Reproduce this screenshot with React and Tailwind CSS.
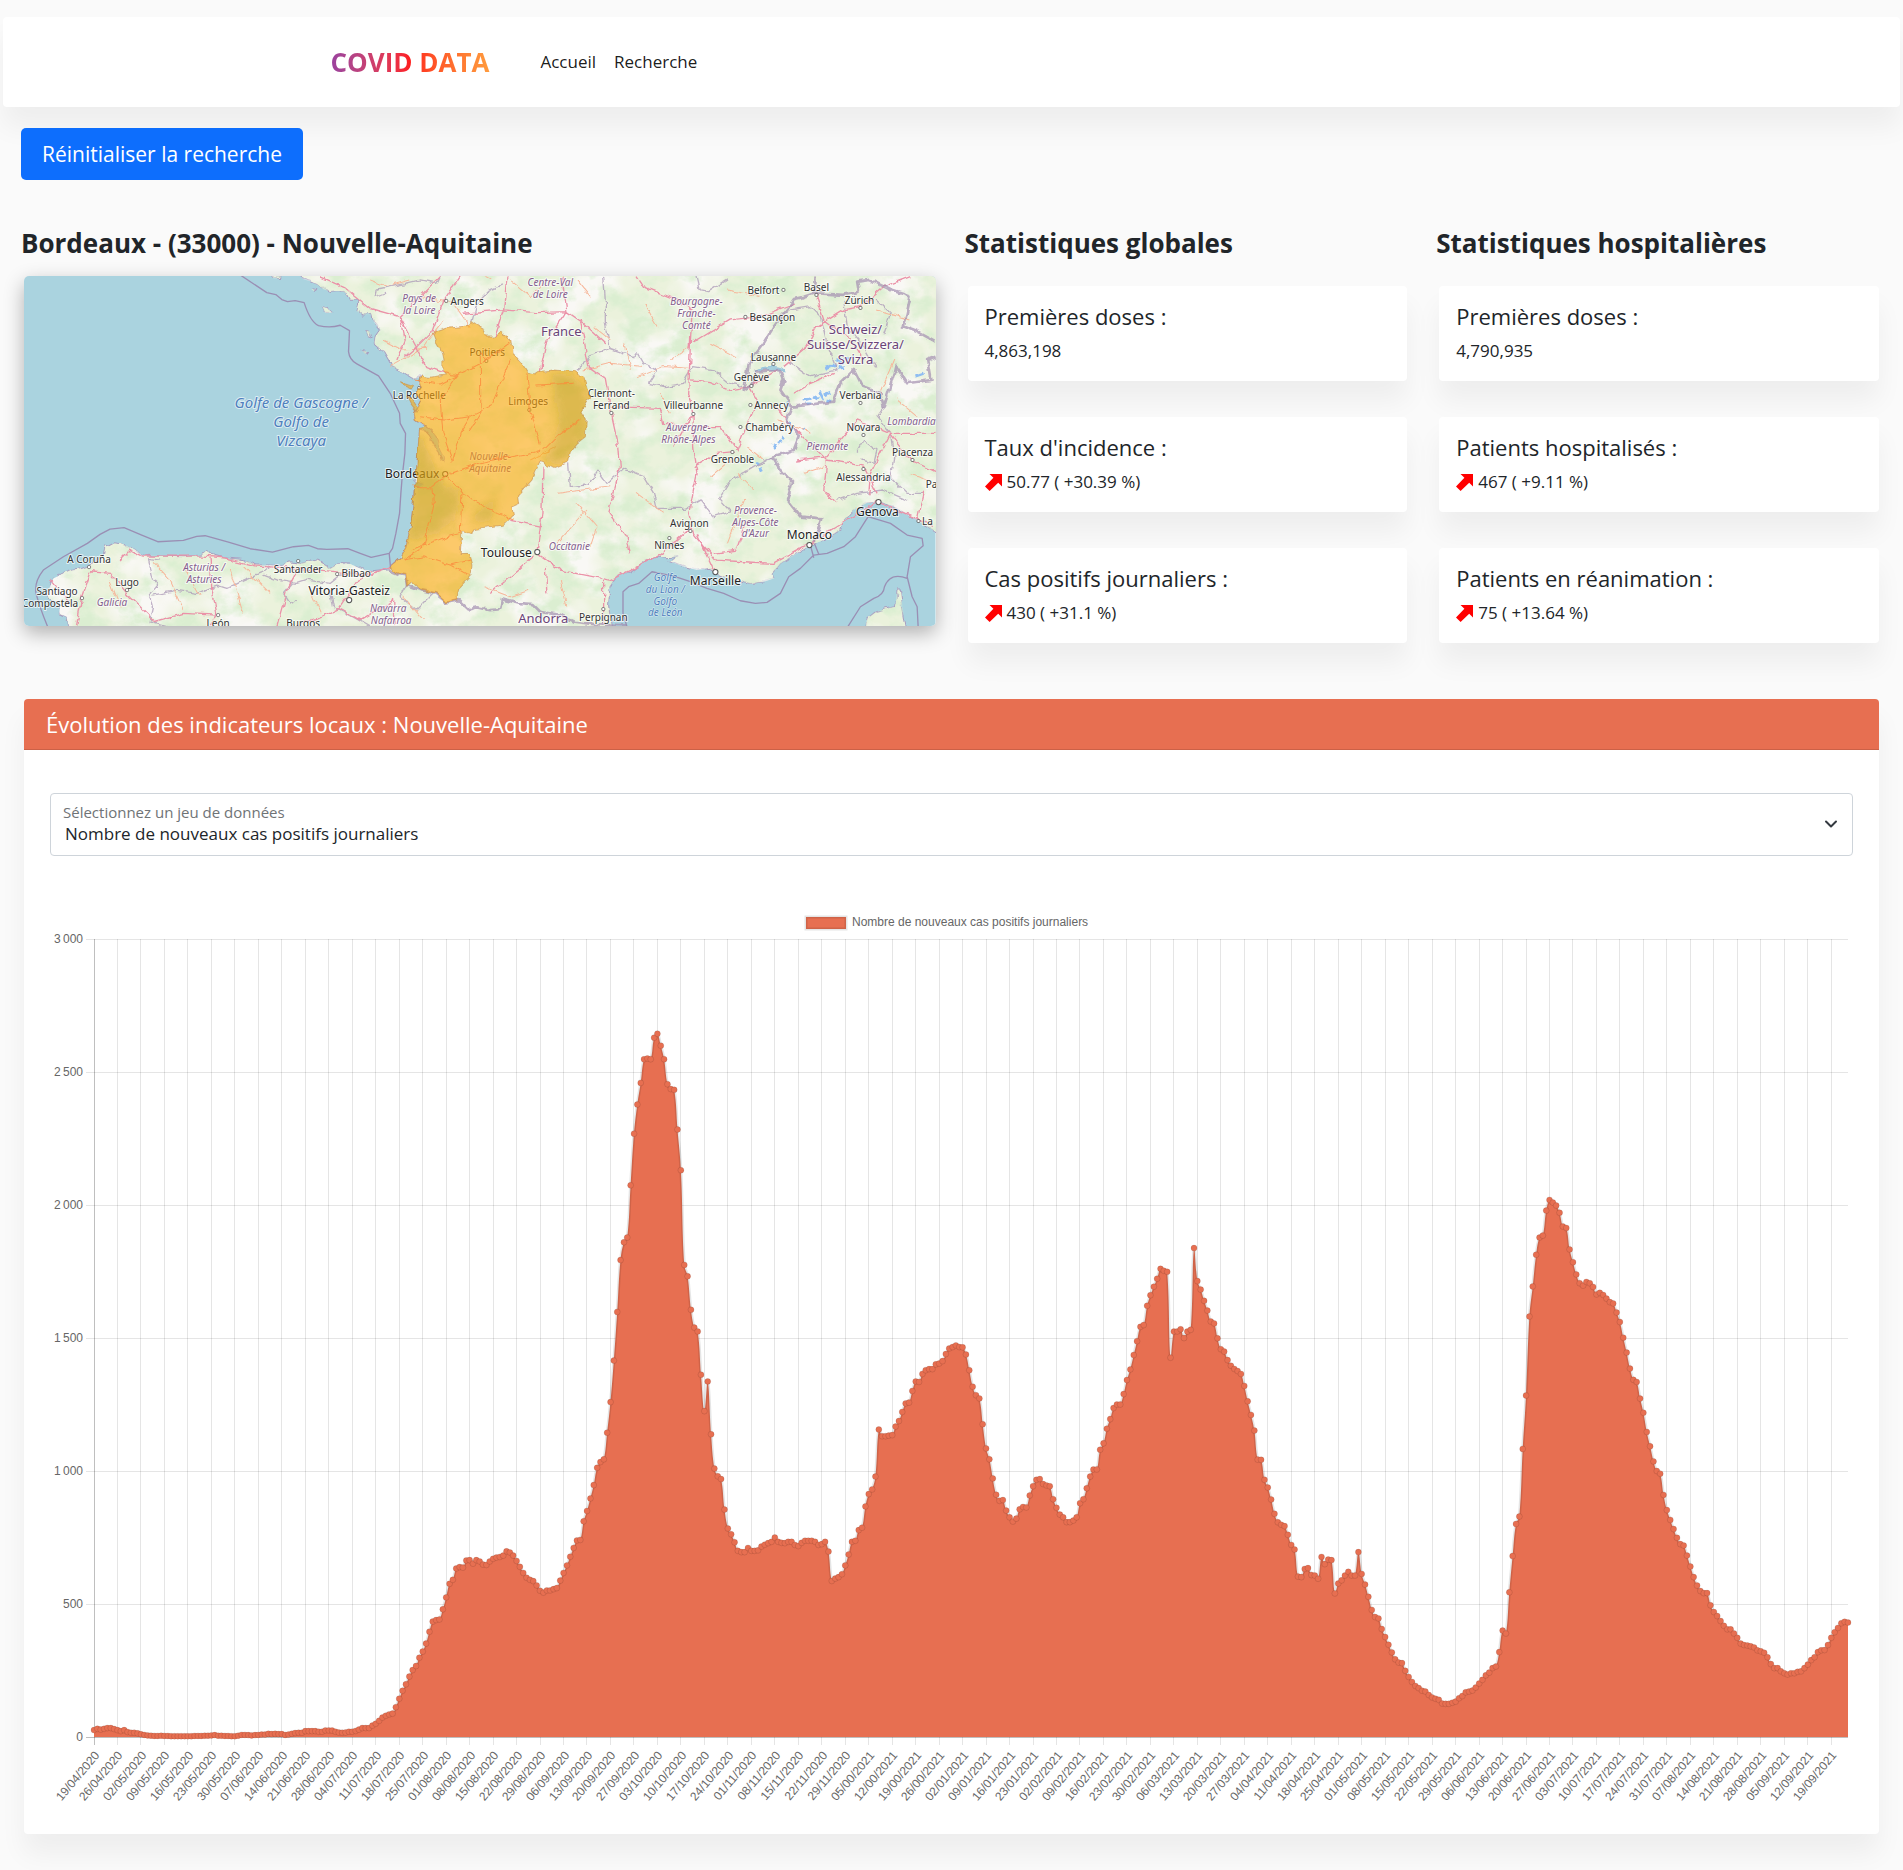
import React from "react";

/* ---------- Data ---------- */

const DAILY_CASES = [
  26, 31, 28, 31, 34, 34, 30, 26, 22, 26, 19, 16, 16, 14, 10, 8, 6, 5, 4, 4, 5, 4, 4, 3, 3, 3, 3, 3, 3, 3, 4, 4, 4, 5, 5, 6, 7, 5, 5, 4,
  4, 3, 3, 5, 8, 8, 7, 6, 7, 8, 9, 9, 12, 11, 12, 11, 11, 8, 9, 12, 15, 16, 16, 22, 22, 22, 22, 20, 20, 25, 25, 24, 20, 17, 16, 17, 20, 20, 23, 28,
  34, 34, 34, 43, 50, 61, 73, 80, 85, 88, 112, 144, 174, 198, 227, 252, 267, 298, 321, 351, 396, 434, 440, 442, 480, 525, 576, 591, 634, 639,
  637, 664, 665, 652, 665, 660, 648, 647, 660, 670, 675, 677, 682, 698, 694, 682, 662, 640, 617, 599, 591, 586, 570, 550, 543, 551, 551, 556, 560, 588,
  617, 645, 678, 711, 739, 741, 811, 850, 897, 947, 1012, 1034, 1044, 1144, 1259, 1415, 1598, 1793, 1860, 1878, 2074, 2268, 2378, 2459, 2548, 2551, 2548, 2629, 2644, 2599,
  2548, 2454, 2436, 2433, 2284, 2131, 1775, 1732, 1606, 1539, 1525, 1362, 1225, 1337, 1138, 1009, 980, 970, 855, 784, 762, 732, 700, 695, 695, 711, 700, 700, 702, 716,
  723, 729, 734, 750, 734, 730, 729, 734, 734, 722, 718, 730, 738, 738, 738, 734, 722, 725, 734, 697, 587, 596, 601, 612, 645, 686, 734, 738, 778, 787,
  867, 913, 931, 979, 1156, 1131, 1131, 1133, 1135, 1167, 1188, 1222, 1254, 1257, 1301, 1337, 1335, 1365, 1379, 1383, 1383, 1401, 1404, 1413, 1440, 1461, 1466, 1472, 1466, 1465,
  1438, 1379, 1317, 1285, 1273, 1176, 1085, 1044, 972, 911, 888, 891, 851, 826, 810, 821, 856, 865, 863, 908, 943, 967, 970, 951, 946, 943, 894, 862, 836, 826,
  808, 808, 814, 826, 879, 894, 935, 979, 1006, 1006, 1080, 1104, 1159, 1195, 1237, 1250, 1250, 1289, 1342, 1382, 1436, 1488, 1542, 1549, 1621, 1661, 1693, 1723, 1760, 1753,
  1749, 1426, 1524, 1525, 1533, 1500, 1524, 1531, 1838, 1714, 1682, 1640, 1603, 1562, 1555, 1499, 1458, 1449, 1417, 1396, 1384, 1376, 1365, 1320, 1262, 1211, 1152, 1043, 1042, 967,
  938, 893, 839, 807, 798, 793, 760, 722, 705, 603, 601, 632, 635, 609, 607, 595, 677, 650, 667, 665, 540, 577, 589, 607, 621, 607, 607, 695, 613, 573,
  527, 478, 451, 446, 406, 376, 347, 318, 292, 280, 278, 249, 226, 207, 192, 184, 174, 171, 158, 149, 144, 140, 126, 125, 125, 129, 133, 146, 154, 168,
  171, 175, 186, 201, 215, 232, 242, 259, 265, 319, 400, 389, 544, 680, 801, 829, 1083, 1284, 1581, 1694, 1813, 1878, 1885, 1979, 2019, 2009, 1998, 1971, 1919, 1914,
  1833, 1785, 1739, 1706, 1697, 1711, 1706, 1692, 1664, 1670, 1662, 1648, 1635, 1630, 1596, 1560, 1501, 1445, 1385, 1343, 1335, 1272, 1219, 1147, 1093, 1036, 1000, 990, 910, 853,
  816, 782, 749, 725, 720, 682, 641, 601, 569, 549, 541, 541, 495, 470, 455, 436, 418, 405, 405, 389, 373, 351, 346, 344, 341, 337, 326, 322, 317, 300,
  274, 259, 259, 247, 240, 235, 240, 240, 245, 247, 259, 272, 289, 300, 319, 326, 327, 346, 373, 394, 410, 428, 433, 430,
];

const WEEKS = [
  ["2020", "19/04 26/04 02/05 09/05 16/05 23/05 30/05 07/06 14/06 21/06 28/06 04/07 11/07 18/07 25/07 01/08 08/08 15/08 22/08 29/08 06/09 13/09 20/09 27/09 03/10 10/10 17/10 24/10 01/11 08/11 15/11 22/11 29/11"],
  ["2021", "05/00 12/00 19/00 26/00 02/01 09/01 16/01 23/01 02/02 09/02 16/02 23/02 30/02 06/03 13/03 20/03 27/03 04/04 11/04 18/04 25/04 01/05 08/05 15/05 22/05 29/05 06/06 13/06 20/06 27/06 03/07 10/07 17/07 24/07 31/07 07/08 14/08 21/08 28/08 05/09 12/09 19/09"],
].flatMap(([year, days]) => days.split(" ").map((d) => `${d}/${year}`));

const GLOBAL_STATS = [
  { label: "Premières doses :", value: "4,863,198" },
  { label: "Taux d'incidence :", value: "50.77 ( +30.39 %)", up: true },
  { label: "Cas positifs journaliers :", value: "430 ( +31.1 %)", up: true },
];

const HOSPITAL_STATS = [
  { label: "Premières doses :", value: "4,790,935" },
  { label: "Patients hospitalisés :", value: "467 ( +9.11 %)", up: true },
  { label: "Patients en réanimation :", value: "75 ( +13.64 %)", up: true },
];

/* ---------- Map ---------- */

const LAND =
  "M860,40 L880,58 900,64 925,75 940,88 960,95 985,92 1010,100 1020,118 1045,118 1045,135 1040,155 1060,165 1085,163 1090,185 1110,210 1095,232 1092,250 1120,275 1135,300 1145,320 1175,335 1200,350 1215,357 1235,348 1225,370 1230,385 1218,400 1235,420 1225,440 1212,460 1215,478 1240,495 1262,508 1278,530 1288,565 1302,604 1292,598 1275,562 1258,530 1238,508 1228,505 1224,560 1218,640 1214,665 1240,672 1225,683 1213,680 1208,740 1200,800 1188,860 1170,895 1140,920 1137,930 1085,935 1050,925 1020,912 985,910 960,925 930,905 905,900 870,910 840,905 815,918 780,915 740,915 700,898 640,893 610,885 590,872 570,885 520,890 450,888 395,885 375,868 350,858 330,850 310,848 285,862 280,885 262,900 240,915 215,925 190,930 160,940 130,955 120,980 110,1000 120,1015 150,1030 148,1060 170,1070 180,1110 1805,1110 1795,1040 1798,980 1820,945 1860,935 1900,905 1940,888 1970,893 2000,890 1980,905 2020,920 2060,930 2100,925 2115,940 2140,950 2200,965 2220,970 2260,965 2290,955 2285,940 2310,910 2360,880 2400,855 2440,840 2490,810 2500,785 2530,750 2570,728 2610,725 2650,740 2700,770 2740,795 2790,820 2790,40 Z" +
  "M2565,1110 L2570,1075 2595,1055 2630,1045 2655,1040 2660,990 2670,990 2676,1040 2688,1110 Z" +
  "M937,140 L950,145 966,158 945,158 Z M1068,212 L1078,214 1085,232 1074,228 Z M1055,272 L1070,275 1066,282 Z M904,87 L916,89 910,94 Z M785,48 L812,48 812,56 790,55 Z";

const REGION =
  "M1267,220 L1310,205 1370,198 1385,185 1400,195 1422,208 1428,228 1450,228 1472,217 1505,245 1508,280 1535,310 1550,335 1575,342 1585,335 1630,330 1695,335 1720,355 1738,410 1712,455 1728,480 1725,530 1700,550 1680,575 1675,605 1628,625 1590,605 1580,625 1565,660 1525,705 1528,730 1505,740 1510,765 1480,795 1440,800 1395,805 1385,820 1355,815 1350,880 1375,880 1385,915 1383,945 1345,985 1340,1020 1310,1028 1280,1000 1230,990 1205,965 1190,978 1185,945 1160,938 1140,922 1170,895 1188,860 1200,800 1208,740 1213,680 1222,660 1218,640 1224,560 1228,505 1250,500 1215,478 1212,460 1225,440 1235,420 1218,400 1230,385 1225,370 1235,348 1260,352 1305,345 1298,335 1298,300 1290,265 1275,240 Z" +
  "M1170,368 L1185,372 1210,380 1205,387 1180,376 Z M1190,412 L1205,420 1222,445 1218,455 1200,432 Z";

const MARITIME =
  "M690,45 L770,98 797,104 815,119 832,125 855,122 882,128 Q900,185 925,197 Q960,205 990,196 L1018,212 1015,275 Q1018,300 1040,312 L1105,348 1140,400 1168,460 1170,490 1186,520 1184,580 1176,650 1172,700 1168,760 1157,820 1147,865 1137,880 1083,892 1050,880 1013,866 950,868 922,866 895,856 850,860 787,876 720,866 655,846 585,827 560,829 520,841 443,845 395,825 342,803 300,807 270,823 232,850 160,890 100,930 Q72,965 78,1000 Q90,1045 113,1100 M1137,880 L1141,922" +
  "M1850,1100 L1838,1060 1838,995 1855,980 1885,970 1925,935 1990,948 2040,965 2090,985 2140,1000 2190,1022 2235,1030 2270,1027 2310,1000 2335,950 2370,925 2410,885 2450,880 2500,860 2535,830 2573,770 M2400,855 L2410,893 M2412,850 L2426,885 M2573,770 L2640,790 2690,825 2735,835 2738,857 2700,890 2690,950 2705,1010 2720,1040 2723,1100 M2690,955 Q2640,935 2622,980 Q2620,1005 2590,1015 L2550,1040 2512,1100";

const BORDERS =
  "M1137,930 L1165,942 1185,945 1190,975 1225,988 1275,1000 1310,1028 1345,1020 1375,1048 1400,1042 1440,1050 1470,1047 1475,1018 1530,1032 1570,1035 1590,1055 1650,1065 1690,1085 1750,1092 1850,1096" +
  "M2415,50 L2415,100 2385,110 2350,118 2330,150 2290,200 2260,250 2215,310 2210,350 2200,390 2225,375 2235,335 2310,330 2320,360 2310,390 2345,440 2430,430 2470,425 2490,370 2530,330 2555,380 2610,400 2620,440 2650,340 2655,318 2690,370 2760,360 2750,300 2775,290 M2415,100 L2500,105 2545,95 2540,65 2580,60 2640,90 2700,110 2680,200 2720,215 2775,245" +
  "M2345,440 L2330,480 2365,530 2350,570 2285,590 2310,630 2345,670 2330,720 2370,770 2435,775 2425,810 2410,845";

const ADMIN =
  "M1095,112 L1098,88 1180,72 1230,60 1280,70 1290,48 M1098,112 L1128,100 M1385,185 L1400,130 1440,90 1475,75 M1780,48 L1785,120 1785,190 1800,265 1870,290 1880,275 1900,310 1940,330 1915,370 1960,380 2020,370 2030,350 2050,320 2110,330 2150,365 2195,380 M1800,265 L1740,285 1735,300 1700,330 M1675,610 L1680,680 1730,675 1760,630 1790,670 1840,625 1900,650 1930,700 1940,745 2025,745 2070,720 2110,770 2160,755 2125,715 2160,660 2200,640 2250,610 2285,590 M2060,48 L2070,90 2095,95 2150,60 M415,895 L430,960 445,970 420,1000 430,1040 420,1085 470,1100 M415,895 L450,900 M430,1005 L500,990 560,1000 620,975 650,985 700,960 760,935 780,918 M760,945 L800,960 860,970 890,960 960,970 1010,930 M850,965 L820,1000 840,1030 860,1020 M960,990 L970,1040 1010,1060 1080,1100 M1190,975 L1170,1010 1220,1050 1270,1000 M2540,575 L2560,540 2600,570 2590,610 2550,600 M2620,440 L2600,470 2640,520 2650,590 2640,650 2690,700 2740,700 M2480,720 L2540,700 2620,690 2690,720 M2300,180 L2340,150 2400,140 2430,170 2450,250 2480,330 2400,350 2330,300 M2500,120 L2510,200 2560,260 2600,330 M2600,120 L2640,160 2620,220";

const MOTORWAYS =
  "M1290,48 L1230,110 1170,170 M1170,170 L1080,145 1000,80 930,50 M1170,170 L1215,255 1250,320 1300,338 1340,348 M1170,170 L1185,240 1160,300 M1265,215 L1300,125 1350,50 M1265,215 L1220,260 1185,290 M1360,160 L1480,150 1580,158 1670,155 1720,190 1785,250 M1480,150 L1490,50 M1480,150 L1455,225 M1655,50 L1670,155 1610,240 1590,335 M1710,180 L1735,320 1785,355 1803,460 1825,560 1830,620 1795,760 1850,830 1860,880 M1440,1000 L1500,950 1580,880 1650,930 1800,960 1860,930 1950,880 2000,840 2045,800 2020,820 M1580,880 L1595,760 1598,620 M1595,800 L1500,780 M1803,440 L1950,445 1960,490 2060,500 2130,500 2180,570 2240,420 2220,385 M2048,465 L2035,400 2040,250 2045,150 2000,120 1900,80 1880,50 M2040,360 L2100,365 2160,390 2220,380 2300,330 M2045,250 L2160,180 2250,170 2350,130 M2048,465 L2050,560 2060,640 2035,760 2050,820 2115,900 2200,905 2290,910 2400,850 2480,800 2600,725 2680,760 2770,800 M2050,620 L2120,580 2170,575 M2060,820 L2115,935 M2290,430 L2345,500 2450,600 2520,610 2560,620 2600,700 M2350,400 L2400,370 2470,340 M2360,600 L2450,590 2540,480 2640,520 2775,520 M2640,520 L2580,640 2575,700 M2450,600 L2440,690 2480,730 M2640,520 L2700,600 2775,635 M2720,780 L2740,690 M2320,320 L2380,270 2420,200 2500,150 2550,140 M2550,140 L2620,80 2700,50 M2415,100 L2440,180 2530,250 2560,300 M395,888 L580,888 640,893 740,918 860,925 930,930 1080,945 1140,922 M600,893 L605,985 620,1060 600,1098 M240,935 L300,940 360,1010 430,1080 M240,935 L215,1010 200,1098 M330,900 L360,870 395,888 M120,960 L180,1030 M800,1098 L830,990 865,925 M985,1045 L1050,950 1085,935 M985,1045 L920,1075 860,1098 M985,1045 L1050,1080 1150,1020 1155,1098 M430,1085 L520,1060 620,1065 M2045,465 L1990,560 M2110,880 L2180,870 2210,780 M1780,960 L1780,1098 M1605,920 L1610,1000";

const ORANGE_ROADS =
  "M1120,240 L1180,270 1250,265 M1140,320 L1230,270 1300,180 M1080,60 L1130,80 1200,60 M1230,110 L1330,130 1380,200 M1440,60 L1420,50 M1750,200 L1800,240 M1560,600 L1640,560 M1900,130 L1940,200 M1720,330 L1800,310 1900,320 M1980,300 L2040,260 M1950,400 L1980,460 M2100,650 L2160,600 M2210,560 L2260,600 M1640,850 L1730,750 M1640,700 L1800,680 M2150,850 L2200,720 M430,905 L480,960 520,1050 M660,930 L700,1060 M300,960 L330,1040 M700,920 L780,1000 M2380,640 L2440,620 M2650,300 L2600,420 M2150,90 L2250,110 M2600,150 L2700,180" +
  "M1880,350 L1960,320 2035,325 M1500,60 L1560,110 1600,70 M1700,60 L1740,110 M1840,250 L1860,330 M2100,250 L2180,290 M1700,730 L1760,800 1740,860 M1880,700 L1960,760 M2180,640 L2230,690 M2300,480 L2400,520 M2700,640 L2760,660 M2660,420 L2720,470 M520,920 L570,1010 M900,990 L930,1060 M1180,1010 L1240,1080 M1420,980 L1500,1010 1560,990 M1650,960 L1670,1040";

const REGION_ROADS =
  "M1215,360 L1290,372 1340,348 1430,300 1410,280 1412,460 1380,510 M1340,348 L1290,420 1298,520 1325,600 M1325,605 L1350,520 1380,470 1440,440 1500,300 M1320,640 L1420,605 1560,580 1590,570 M1560,450 L1590,550 M1600,570 L1640,530 1710,480 M1305,642 L1355,700 1460,760 1510,780 M1355,700 L1350,820 1310,830 1200,870 M1265,680 L1270,740 1240,860 1180,900 1240,890 1320,915 1380,900 M1210,680 L1265,680 1305,650 M1575,375 L1690,370 M1550,340 L1560,450 M1230,470 L1300,480 1380,470 M1500,250 L1430,300 M1320,915 L1375,945";

const CITIES = [
  ["Angers", 1370, 134, 1308, 123], ["Poitiers", 1430, 289, 1427, 303], ["La Rochelle", 1226, 418, 1227, 384],
  ["Limoges", 1555, 436, 1557, 450], ["A Coruña", 237, 909, 237, 921], ["Lugo", 351, 977, 351, 990],
  ["Santiago", 142, 1006, 216, 1014], ["Compostela", 120, 1042], ["Santander", 863, 939, 864, 903],
  ["Bilbao", 1038, 952, 981, 943], ["León", 623, 1100, 623, 1065], ["Burgos", 878, 1100],
  ["Clermont-", 1803, 412], ["Ferrand", 1803, 448, 1803, 460], ["Villeurbanne", 2050, 448, 2049, 462],
  ["Belfort", 2260, 101, 2319, 90], ["Basel", 2419, 94, 2418, 105], ["Zürich", 2548, 131, 2549, 144],
  ["Besançon", 2286, 182, 2205, 171], ["Lausanne", 2288, 302, 2289, 312], ["Genève", 2222, 364, 2223, 378],
  ["Annecy", 2283, 448, 2220, 436], ["Chambéry", 2276, 513, 2190, 501], ["Grenoble", 2166, 610, 2166, 576],
  ["Verbania", 2551, 418, 2550, 430], ["Novara", 2559, 513, 2559, 525], ["Piacenza", 2706, 589, 2706, 600],
  ["Alessandria", 2559, 663, 2559, 627], ["Avignon", 2038, 800, 2040, 813], ["Nîmes", 1978, 866, 1977, 834],
  ["Perpignan", 1778, 1082, 1779, 1047], ["Pa", 2762, 683], ["La", 2752, 795, 2725, 784],
];
const METROPOLES = [
  ["Bordeaux", 1207, 655, 1304, 642], ["Vitoria-Gasteiz", 1018, 1004, 1017, 1020], ["Toulouse", 1489, 890, 1581, 876],
  ["Marseille", 2116, 976, 2115, 936], ["Monaco", 2396, 836, 2397, 855], ["Genova", 2602, 768, 2604, 726],
];
const REGIONS = [
  ["Pays de", 1228, 126], ["la Loire", 1228, 161], ["Centre-Val", 1621, 79], ["de Loire", 1621, 114],
  ["Bourgogne-", 2058, 136], ["Franche-", 2058, 172], ["Comté", 2058, 207], ["Auvergne-", 2035, 513],
  ["Rhône-Alpes", 2035, 548], ["Provence-", 2235, 761], ["Alpes-Côte", 2235, 797], ["d'Azur", 2235, 832],
  ["Occitanie", 1676, 870], ["Piemonte", 2451, 569], ["Lombardia", 2704, 494], ["Galicia", 307, 1038],
  ["Asturias /", 583, 933], ["Asturies", 583, 968], ["Navarra", 1133, 1056], ["Nafarroa", 1142, 1091],
  ["Nouvelle-", 1440, 601], ["Aquitaine", 1440, 636],
];
const COUNTRIES = [
  ["France", 1654, 229], ["Andorra", 1600, 1089], ["Schweiz/", 2536, 222], ["Suisse/Svizzera/", 2536, 267], ["Svizra", 2536, 312],
];
const SEAS = [["Golfe", 1964, 963], ["du Lion /", 1964, 998], ["Golfo", 1964, 1034], ["de León", 1964, 1069]];
const GULF = [["Golfe de Gascogne /", 874, 445], ["Golfo de", 874, 501], ["Vizcaya", 874, 557]];

const mx = (v) => Math.round((v - 42) / 3);
const my = (v) => Math.round((v - 48) / 3);

function Labels({ items, className }) {
  return (
    <g className={className} textAnchor="middle" strokeLinejoin="round" paintOrder="stroke">
      {items.map(([name, x, y]) => (
        <text key={name + x} x={mx(x)} y={my(y)}>{name}</text>
      ))}
    </g>
  );
}

function RegionMap() {
  return (
    <svg viewBox="0 0 911 350" preserveAspectRatio="xMidYMid slice" className="block h-[350px] w-full" role="img" aria-label="Carte de la région Nouvelle-Aquitaine">
      <defs>
        <filter id="coast" x="-5%" y="-5%" width="110%" height="110%">
          <feTurbulence type="fractalNoise" baseFrequency="0.12" numOctaves="2" seed="4" result="n" />
          <feDisplacementMap in="SourceGraphic" in2="n" scale="6" xChannelSelector="R" yChannelSelector="G" />
        </filter>
        <filter id="woods" x="0" y="0" width="100%" height="100%">
          <feTurbulence type="fractalNoise" baseFrequency="0.04 0.05" numOctaves="5" seed="11" />
          <feColorMatrix values="0 0 0 0 0.71  0 0 0 0 0.86  0 0 0 0 0.64  0 3.2 0 0 -1.35" />
          <feComposite in2="SourceAlpha" operator="in" />
        </filter>
        <filter id="fields" x="0" y="0" width="100%" height="100%">
          <feTurbulence type="fractalNoise" baseFrequency="0.02" numOctaves="3" seed="3" />
          <feColorMatrix values="0 0 0 0 0.95  0 0 0 0 0.94  0 0 0 0 0.91  4 0 0 0 -1.7" />
          <feComposite in2="SourceAlpha" operator="in" />
        </filter>
        <filter id="forest" x="-10%" y="-10%" width="120%" height="120%">
          <feGaussianBlur stdDeviation="14" />
        </filter>
      </defs>
      <rect width="911" height="350" fill="#aad3df" />
      <g filter="url(#coast)">
        <g transform="scale(0.33333) translate(-42 -48)">
          <path d={LAND} fill="#ebf2dc" stroke="#a79cc0" strokeWidth="3" />
        </g>
      </g>
      <g filter="url(#fields)"><g transform="scale(0.33333) translate(-42 -48)"><path d={LAND} /></g></g>
      <g filter="url(#woods)"><g transform="scale(0.33333) translate(-42 -48)"><path d={LAND} /></g></g>
      <g filter="url(#coast)">
        <g transform="scale(0.33333) translate(-42 -48)" fill="none" strokeLinejoin="round">
          <path d="M2228,340 Q2250,318 2290,320 2320,322 2320,332 2290,326 2250,330 2230,350 Z M2300,250 L2345,222 2350,228 2310,262 Z M2600,75 L2640,80 2690,105 2700,118 2650,105 2610,85 Z M2548,150 L2570,180 M2555,432 L2558,480" fill="#aad3df" stroke="#9cc7dc" strokeWidth="4" />
          <path d="M2380,420 l20,-6 M2405,408 l18,10 M2425,398 l12,24 M2440,405 l20,-8 M2448,420 l14,4 M2385,432 l12,0 M2445,325 l18,-8 M2462,310 l14,12 M2480,300 l10,14 M2500,290 l16,6 M2525,285 l10,8 M2485,322 l16,-2 M2325,430 l14,6 M2300,550 l14,-8 M2290,555 l6,12 M2315,530 l8,8 M2235,610 l8,4 M2250,620 l6,12 M2335,482 l6,8 M2372,508 l8,4 M2715,348 l24,-8" stroke="#8fbdf2" strokeWidth="9" />
          <path d={ADMIN} stroke="#ad9bb8" strokeWidth="4" opacity="0.75" />
          <path d={ORANGE_ROADS} stroke="#f7b79b" strokeWidth="3" />
          <path d={MOTORWAYS} stroke="#eb92a8" strokeWidth="4" />
          <path d={BORDERS} stroke="#a48fb0" strokeWidth="8" opacity="0.7" />
        </g>
      </g>
      <g transform="scale(0.33333) translate(-42 -48)">
        <path d={MARITIME} fill="none" stroke="#9a8fb4" strokeWidth="4" strokeLinejoin="round" />
      </g>
      <Labels items={CITIES} className="fill-[#333333] stroke-white/70 stroke-2 font-['Noto_Sans','Open_Sans',sans-serif] text-[10px]" />
      <Labels items={METROPOLES} className="fill-[#222222] stroke-white/70 stroke-2 font-['Noto_Sans','Open_Sans',sans-serif] text-[12px]" />
      <Labels items={REGIONS} className="fill-[#855f8e] stroke-white/70 stroke-2 font-['Noto_Sans','Open_Sans',sans-serif] text-[10px] italic" />
      <Labels items={COUNTRIES} className="fill-[#6a4478] stroke-white/70 stroke-2 font-['Noto_Sans','Open_Sans',sans-serif] text-[13px]" />
      <Labels items={SEAS} className="fill-[#4f7fbd] stroke-white/60 stroke-1 font-['Noto_Sans','Open_Sans',sans-serif] text-[10px] italic" />
      <Labels items={GULF} className="fill-[#4f7fbd] stroke-white/60 stroke-2 font-['Noto_Sans','Open_Sans',sans-serif] text-[15px] italic" />
      <g fill="#ffffff" stroke="#555555">
        {CITIES.filter((c) => c.length > 3).map(([name, , , x, y]) => (
          <rect key={name} x={mx(x) - 1.5} y={my(y) - 1.5} width="3" height="3" rx="1" strokeWidth="0.8" />
        ))}
        {METROPOLES.map(([name, , , x, y]) => (
          <circle key={name} cx={mx(x)} cy={my(y)} r="2.6" strokeWidth="1" />
        ))}
      </g>
      <g filter="url(#coast)">
        <g transform="scale(0.33333) translate(-42 -48)">
          <path d={REGION} fill="#ffa500" fillOpacity="0.57" stroke="#c58a4a" strokeOpacity="0.6" strokeWidth="3" />
          <clipPath id="region"><path d={REGION} /></clipPath>
          <g clipPath="url(#region)">
            <path filter="url(#forest)" d="M1228,510 L1210,560 1205,640 1200,740 1195,800 1195,840 1280,820 1340,770 1350,700 1300,670 1260,590 Z M1620,340 L1690,345 1735,400 1730,520 1660,610 1600,610 1650,480 Z M1380,780 L1460,700 1440,790 Z" fill="#a39a1e" fillOpacity="0.3" />
          </g>
          <path d={REGION_ROADS} fill="none" stroke="#fb8a3c" strokeWidth="3" strokeLinejoin="round" opacity="0.8" />
        </g>
      </g>
    </svg>
  );
}

/* ---------- Area chart ---------- */

const LEFT = 44;
const RIGHT = 1798;
const TOP = 32;
const BOTTOM = 830;
const STEP = (RIGHT - LEFT) / (DAILY_CASES.length - 1);
const POINTS = DAILY_CASES.map((v, i) => [LEFT + i * STEP, BOTTOM - (v * (BOTTOM - TOP)) / 3000]);

/* Bezier smoothing with control points split by the neighbouring distances. */
function smoothLine(points, tension) {
  const ctrl = points.map((p, i) => {
    const a = points[i - 1] || p;
    const b = points[i + 1] || p;
    const d1 = Math.hypot(p[0] - a[0], p[1] - a[1]);
    const d2 = Math.hypot(b[0] - p[0], b[1] - p[1]);
    const f1 = (tension * d1) / (d1 + d2);
    const f2 = (tension * d2) / (d1 + d2);
    const dx = b[0] - a[0];
    const dy = b[1] - a[1];
    return [p[0] - f1 * dx, p[1] - f1 * dy, p[0] + f2 * dx, p[1] + f2 * dy];
  });
  return points
    .map((p, i) =>
      i === 0
        ? `M${p[0].toFixed(1)},${p[1].toFixed(1)}`
        : `C${ctrl[i - 1][2].toFixed(1)},${ctrl[i - 1][3].toFixed(1)} ${ctrl[i][0].toFixed(1)},${ctrl[i][1].toFixed(1)} ${p[0].toFixed(1)},${p[1].toFixed(1)}`
    )
    .join("");
}

const LINE = smoothLine(POINTS, 0.4);
const Y_TICKS = [
  [0, "0"], [500, "500"], [1000, "1\u202f000"], [1500, "1\u202f500"], [2000, "2\u202f000"], [2500, "2\u202f500"], [3000, "3\u202f000"],
];

function CasesChart() {
  return (
    <svg viewBox="0 0 1803 902" className="block h-auto w-full font-['Liberation_Sans',Arial,sans-serif] text-[12px]" role="img" aria-label="Nombre de nouveaux cas positifs journaliers">
      <rect x="756" y="10" width="40" height="12" fill="#e76f51" stroke="#000000" strokeOpacity="0.1" strokeWidth="3" />
      <text x="802" y="19" fill="#666666">Nombre de nouveaux cas positifs journaliers</text>
      <g stroke="#000000" strokeWidth="1" shapeRendering="crispEdges">
        {Y_TICKS.map(([v]) => {
          const y = Math.round(BOTTOM - (v * (BOTTOM - TOP)) / 3000) + 0.5;
          return <line key={v} x1={LEFT - 8} x2={RIGHT} y1={y} y2={y} strokeOpacity={v === 0 ? 0.25 : 0.1} />;
        })}
        {WEEKS.map((w, i) => {
          const x = Math.floor(LEFT + i * 7 * STEP) + 0.5;
          return <line key={w} x1={x} x2={x} y1={TOP} y2={BOTTOM + 8} strokeOpacity={i === 0 ? 0.25 : 0.1} />;
        })}
      </g>
      <g fill="#666666" textAnchor="end">
        {Y_TICKS.map(([v, label]) => (
          <text key={v} x="33" y={Math.round(BOTTOM - (v * (BOTTOM - TOP)) / 3000) + 4}>{label}</text>
        ))}
        {WEEKS.map((w, i) => (
          <text key={w} transform={`translate(${Math.round(LEFT + i * 7 * STEP + 3)} 846) rotate(-50)`} y="4">{w}</text>
        ))}
      </g>
      <path d={`${LINE}L${RIGHT},${BOTTOM}L${LEFT},${BOTTOM}Z`} fill="#e76f51" />
      <path d={LINE} fill="none" stroke="#000000" strokeOpacity="0.1" strokeWidth="3" />
      <g fill="#e76f51" stroke="#000000" strokeOpacity="0.1" strokeWidth="1">
        {POINTS.map(([x, y], i) => (
          <circle key={i} cx={x.toFixed(1)} cy={y.toFixed(1)} r="3" />
        ))}
      </g>
    </svg>
  );
}

/* ---------- Page ---------- */

function StatCard({ label, value, up }) {
  return (
    <article className="mx-[3px] rounded bg-white p-[17px] shadow-[0_20px_27px_0_rgba(0,0,0,0.05)]">
      <h3 className="mb-[9px] text-[22px] leading-[26px]">{label}</h3>
      <p className="flex items-center gap-[5px] leading-[26px]">
        {up && (
          <svg viewBox="0 0 17 17" className="size-[17px] shrink-0" fill="#ff0000" aria-hidden="true">
            <path d="M4.5 0H17V12.5L13.2 8.8 4.6 17 0 12.6 8.4 3.8Z" />
          </svg>
        )}
        <span>{value}</span>
      </p>
    </article>
  );
}

function StatColumn({ title, stats }) {
  return (
    <section>
      <h2 className="mb-[27px] text-[26px] leading-8 font-bold">{title}</h2>
      <div className="flex flex-col gap-9">
        {stats.map((s) => (
          <StatCard key={s.label} {...s} />
        ))}
      </div>
    </section>
  );
}

export default function App() {
  return (
    <div className="min-h-screen bg-[#fafafa] pt-[17px] pb-9 font-['Open_Sans','Noto_Sans',sans-serif] text-[17px] text-[#212529]">
      <header className="mx-[3px] rounded bg-white py-6 shadow-[0_20px_27px_0_rgba(0,0,0,0.05)]">
        <nav className="mx-auto flex max-w-[1322px] items-center px-5">
          <a href="#" className="bg-linear-to-r from-[#833ab4] via-[#fd1d1d] to-[#fcb045] bg-clip-text px-5 text-[26px] leading-[42px] font-bold text-transparent">
            COVID DATA
          </a>
          <ul className="ml-[22px] flex">
            <li><a href="#" className="px-[9px] text-black/90">Accueil</a></li>
            <li><a href="#" className="px-[9px] text-black/90">Recherche</a></li>
          </ul>
        </nav>
      </header>

      <main className="px-[21px] pt-[21px]">
        <button type="button" className="relative rounded-[5px] bg-[#0d6efd] px-[21px] py-[10px] text-[21px] leading-8 text-white">
          Réinitialiser la recherche
        </button>

        <div className="mt-[47px] grid grid-cols-4 gap-x-[26px]">
          <section className="col-span-2">
            <h2 className="mb-[17px] text-[26px] leading-8 font-bold">Bordeaux - (33000) - Nouvelle-Aquitaine</h2>
            <div className="mx-[3px] overflow-hidden rounded-[5px] shadow-[0_7px_20px_0_rgba(0,0,0,0.3)]">
              <RegionMap />
            </div>
          </section>
          <StatColumn title="Statistiques globales" stats={GLOBAL_STATS} />
          <StatColumn title="Statistiques hospitalières" stats={HOSPITAL_STATS} />
        </div>

        <section className="mx-[3px] mt-14 rounded bg-white shadow-[0_20px_27px_0_rgba(0,0,0,0.05)]">
          <h2 className="rounded-t border-b border-black/12 bg-[#e76f51] px-[22px] py-3 text-[22px] leading-[26px] text-white">
            Évolution des indicateurs locaux : Nouvelle-Aquitaine
          </h2>
          <div className="px-[26px] pt-[43px] pb-[25px]">
            <div className="relative mb-[51px]">
              <label htmlFor="dataset" className="pointer-events-none absolute top-[9px] left-[13px] text-[15px] leading-5 text-[#6f7376]">
                Sélectionnez un jeu de données
              </label>
              <select id="dataset" className="block h-[63px] w-full appearance-none rounded border border-[#ced4da] bg-transparent pt-[26px] pr-10 pb-2 pl-[14px] text-[17px]">
                <option>Nombre de nouveaux cas positifs journaliers</option>
              </select>
              <svg viewBox="0 0 16 16" className="pointer-events-none absolute top-[23px] right-[14px] size-4" fill="none" stroke="#343a40" strokeWidth="2" strokeLinecap="round" strokeLinejoin="round" aria-hidden="true">
                <path d="M3 5.5l5 5 5-5" />
              </svg>
            </div>
            <CasesChart />
          </div>
        </section>
      </main>
    </div>
  );
}
